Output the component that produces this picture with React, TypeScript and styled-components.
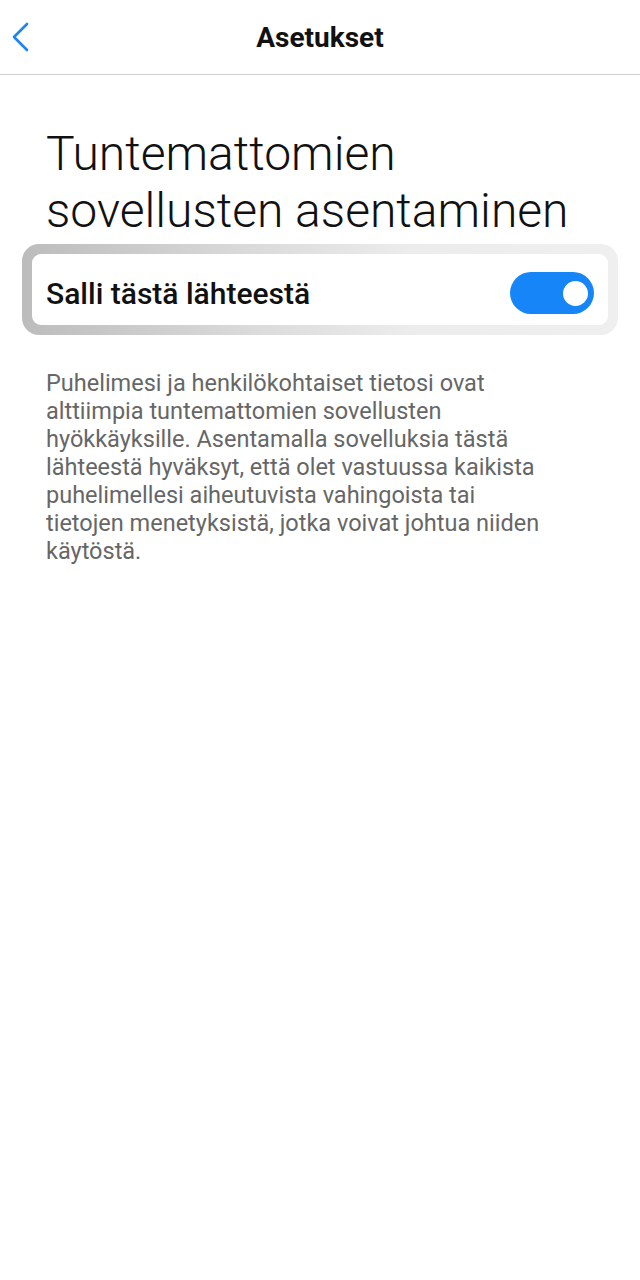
import styled, { createGlobalStyle } from "styled-components";

const GlobalStyle = createGlobalStyle`
  html, body {
    margin: 0;
    padding: 0;
    background: #ffffff;
    font-family: Roboto, "Noto Sans", sans-serif;
  }
`;

const App = () => {
  return (
    <Page>
      <GlobalStyle />
      <Header>
        <Back aria-label="Takaisin">
          <svg width="22" height="32" viewBox="0 0 22 32" fill="none">
            <path d="M17 3 L4 16 L17 29" stroke="#1a84f0" strokeWidth="2.6" strokeLinecap="round" strokeLinejoin="round" />
          </svg>
        </Back>
        <Title>Asetukset</Title>
      </Header>
      <Content>
        <Heading>Tuntemattomien sovellusten asentaminen</Heading>
        <Frame>
          <Card>
            <Label>Salli tästä lähteestä</Label>
            <Toggle $on={true}>
              <Knob />
            </Toggle>
          </Card>
        </Frame>
        <Body>
          Puhelimesi ja henkilökohtaiset tietosi ovat alttiimpia tuntemattomien sovellusten
          hyökkäyksille. Asentamalla sovelluksia tästä lähteestä hyväksyt, että olet vastuussa
          kaikista puhelimellesi aiheutuvista vahingoista tai tietojen menetyksistä, jotka voivat
          johtua niiden käytöstä.
        </Body>
      </Content>
    </Page>
  );
};

export default App;

const Page = styled.div`
  width: 640px;
  min-height: 1280px;
  background: #fff;
`;

const Header = styled.div`
  position: relative;
  height: 74px;
  display: flex;
  align-items: center;
  justify-content: center;
  border-bottom: 1px solid #cfcfcf;
`;

const Back = styled.div`
  position: absolute;
  left: 10px;
  top: 21px;
  display: flex;
`;

const Title = styled.div`
  font-size: 28px;
  font-weight: 700;
  color: #111;
  margin-top: 1px;
`;

const Content = styled.div`
  padding: 50px 22px 0 22px;
`;

const Heading = styled.h1`
  margin: 0 0 5px 24px;
  font-size: 48px;
  font-weight: 300;
  line-height: 57px;
  color: #111;
  width: 550px;
`;

const Frame = styled.div`
  padding: 10px;
  border-radius: 17px;
  background: linear-gradient(90deg, #bcbcbc 0%, #d8d8d8 35%, #ececec 65%, #efefef 100%);
`;

const Card = styled.div`
  height: 71px;
  box-sizing: border-box;
  padding: 7px 14px 0 14px;
  border-radius: 9px;
  background: #fff;
  display: flex;
  align-items: center;
  justify-content: space-between;
`;

const Label = styled.div`
  font-size: 30px;
  font-weight: 500;
  color: #111;
`;

const Toggle = styled.div<{ $on: boolean }>`
  width: 84px;
  height: 42px;
  border-radius: 21px;
  background: ${(p) => (p.$on ? "#1585f8" : "#ccc")};
  display: flex;
  align-items: center;
  justify-content: ${(p) => (p.$on ? "flex-end" : "flex-start")};
  padding: 0 6px;
  box-sizing: border-box;
`;

const Knob = styled.div`
  width: 25px;
  height: 25px;
  border-radius: 50%;
  background: #fff;
`;

const Body = styled.p`
  margin: 34px 0 0 24px;
  font-size: 23.5px;
  line-height: 28px;
  color: #666;
  width: 506px;
`;
